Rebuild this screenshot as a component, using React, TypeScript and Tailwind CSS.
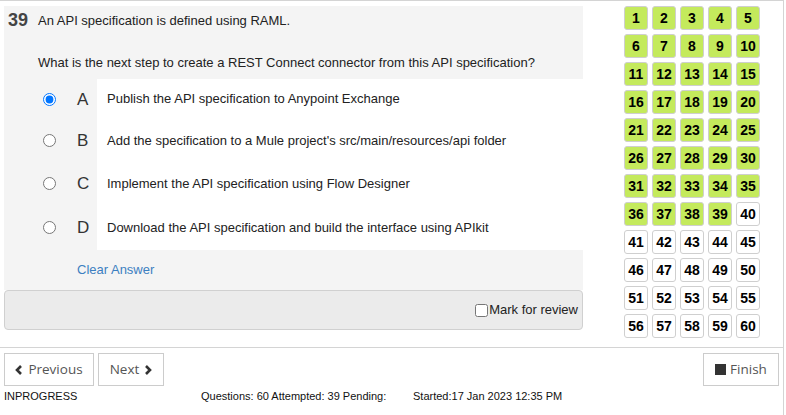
const options = [
  { key: 'A', text: 'Publish the API specification to Anypoint Exchange', h: 'h-[40px]', checked: true },
  { key: 'B', text: "Add the specification to a Mule project's src/main/resources/api folder", h: 'h-[43px]', checked: false },
  { key: 'C', text: 'Implement the API specification using Flow Designer', h: 'h-[43px]', checked: false },
  { key: 'D', text: 'Download the API specification and build the interface using APIkit', h: 'h-[45px]', checked: false },
];

const numbers = Array.from({ length: 60 }, (_, i) => i + 1);

function Chevron({ dir }: { dir: 'left' | 'right' }) {
  return (
    <svg width="8" height="10" viewBox="0 0 8 10" className="text-[#333]">
      <polyline
        points={dir === 'left' ? '6,1 2,5 6,9' : '2,1 6,5 2,9'}
        fill="none"
        stroke="currentColor"
        strokeWidth="2.6"
      />
    </svg>
  );
}

export default function App() {
  return (
    <div className="w-[786px] h-[415px] bg-white overflow-hidden font-['Liberation_Sans',Arial,sans-serif]">
      <div className="w-[784px] h-[415px] border-t border-r border-[#d4d4d4]">
        {/* Top: question + palette */}
        <div className="flex h-[346px] pt-[5px]">
          <div className="ml-1 w-[579px]">
            {/* Question */}
            <div className="flex h-[73px] bg-[#f4f4f4]">
              <div className="w-[29px] pl-[4px] pt-[4px] text-[18px] leading-[21px] font-bold text-[#444]">39</div>
              <div className="flex-1 pl-[5px] pt-[4px] text-[13px] leading-[21px] text-[#222]">
                <p>An API specification is defined using RAML.</p>
                <p className="mt-[21px]">What is the next step to create a REST Connect connector from this API specification?</p>
              </div>
            </div>

            {/* Options */}
            {options.map((o) => (
              <div key={o.key} className={`flex ${o.h}`}>
                <div className="w-[93px] bg-[#f4f4f4] flex items-center">
                  <input
                    type="radio"
                    name="answer"
                    checked={o.checked}
                    readOnly
                    className="m-0 ml-[39px] w-[13px] h-[13px]"
                  />
                  <span className="ml-[21px] text-[17px] leading-none text-[#333]">{o.key}</span>
                </div>
                <div className="flex-1 flex items-center pl-[10px] text-[13px] text-[#222]">{o.text}</div>
              </div>
            ))}

            {/* Clear answer */}
            <div className="h-[40px] bg-[#f4f4f4] flex items-center pl-[73px] text-[13px] text-[#3c7fc1]">
              Clear Answer
            </div>

            {/* Mark for review */}
            <div className="h-[40px] bg-[#ebebeb] border border-[#d0d0d0] rounded-[4px] flex items-center justify-end pr-[4px]">
              <label className="flex items-center text-[13px] text-[#222]">
                <input type="checkbox" className="m-0 w-[13px] h-[13px]" />
                <span className="ml-px">Mark for review</span>
              </label>
            </div>
          </div>

          {/* Palette */}
          <div className="ml-[41px] grid grid-cols-5 gap-[4px] content-start">
            {numbers.map((n) => (
              <div
                key={n}
                className={`w-6 h-6 rounded-[3px] border border-[#cfcfcf] flex items-center justify-center text-[14px] font-bold text-black ${
                  n <= 39 ? 'bg-[#c4ea5c]' : 'bg-white'
                }`}
              >
                {n}
              </div>
            ))}
          </div>
        </div>

        {/* Footer */}
        <div className="border-t border-[#d4d4d4] px-1 pt-[5px]">
          <div className="flex items-center font-['Open_Sans',sans-serif] text-[13.5px] text-[#555]">
            <button className="w-[90px] h-[33px] border border-[#ccc] bg-white flex items-center justify-center gap-[5px]">
              <Chevron dir="left" />
              Previous
            </button>
            <button className="ml-1 w-[66px] h-[33px] border border-[#ccc] bg-white flex items-center justify-center gap-[5px]">
              Next
              <Chevron dir="right" />
            </button>
            <button className="ml-auto w-[76px] h-[33px] border border-[#ccc] bg-white flex items-center justify-center gap-[4px]">
              <span className="inline-block w-[11px] h-[11px] bg-[#333]" />
              Finish
            </button>
          </div>
          <div className="flex mt-[4px] text-[11px] leading-[13px] text-[#111]">
            <span className="w-[197px]">INPROGRESS</span>
            <span className="w-[212px]">Questions: 60 Attempted: 39 Pending:</span>
            <span>Started:17 Jan 2023 12:35 PM</span>
          </div>
        </div>
      </div>
    </div>
  );
}
